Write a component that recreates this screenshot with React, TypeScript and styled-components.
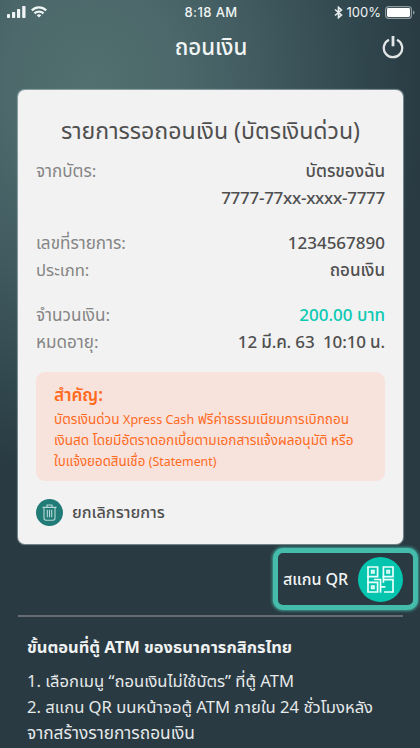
import React from "react";
import styled, { createGlobalStyle } from "styled-components";

const Global = createGlobalStyle`
  *, *::before, *::after { box-sizing: border-box; }
  body { margin: 0; background: #293a42; font-family: "Noto Sans", "Noto Sans Thai", "Open Sans", sans-serif; }
`;

const Screen = styled.main`
  width: 420px;
  height: 748px;
  overflow: hidden;
  display: flex;
  flex-direction: column;
  background: radial-gradient(ellipse 335px 390px at 90px 85px, #527070 0%, #4d696b 25%, #415b60 50%, #324950 78%, #293a42 100%);
`;

const StatusBar = styled.header`
  height: 24px;
  display: grid;
  grid-template-columns: 1fr auto 1fr;
  align-items: center;
  padding: 0 5px 0 7px;
  color: #f1f4f4;
  font-family: "Inter", sans-serif;
`;
const StatusGroup = styled.div<{ $end?: boolean }>`
  display: flex;
  align-items: center;
  justify-content: ${(p) => (p.$end ? "flex-end" : "flex-start")};
  gap: ${(p) => (p.$end ? 4 : 5)}px;
`;
const StatusText = styled.span<{ $size: number; $weight?: number; $gap?: number }>`
  font-size: ${(p) => p.$size}px;
  font-weight: ${(p) => p.$weight ?? 400};
  letter-spacing: ${(p) => p.$gap ?? 0}px;
  white-space: nowrap;
`;

const TitleBar = styled.div`
  height: 66px;
  padding: 6px 15px 0 17px;
  display: grid;
  grid-template-columns: 24px 1fr 24px;
  grid-template-rows: 34px;
  align-items: center;
  justify-items: center;
`;

const Line = styled.span<{ $size: number; $color: string; $weight?: number; $gap?: number; $height?: number }>`
  display: block;
  white-space: pre;
  font-size: ${(p) => p.$size}px;
  line-height: ${(p) => p.$height ?? 27}px;
  height: ${(p) => p.$height ?? 27}px;
  color: ${(p) => p.$color};
  font-weight: ${(p) => p.$weight ?? 400};
  letter-spacing: ${(p) => p.$gap ?? 0}px;
`;
const Latin = styled.span`
  font-size: 0.93em;
`;

const Card = styled.section`
  margin: 0 17px 0 18px;
  height: 454px;
  flex: none;
  padding: 26px 18px 0;
  border-radius: 7px;
  background: #f2f2f2;
  box-shadow: 0 0 1px 1px rgba(190, 208, 208, 0.55);
  display: flex;
  flex-direction: column;
`;
const CardTitle = styled.h2`
  margin: 0 0 13px;
  display: flex;
  justify-content: center;
`;
const Details = styled.div`
  display: grid;
  gap: 18px;
`;
const Row = styled.div`
  display: flex;
  justify-content: space-between;
`;
const Notice = styled.div`
  margin-top: 17px;
  height: 109px;
  padding: 10px 18px 0;
  border-radius: 9px;
  background: #f8e2dc;
`;
const NoticeBody = styled.div`
  margin-top: 1.5px;
`;
const CancelButton = styled.button`
  margin-top: 17.6px;
  padding: 0;
  border: 0;
  background: none;
  display: flex;
  align-items: center;
  gap: 9px;
  font-family: inherit;
  text-align: left;
`;
const Disc = styled.span<{ $size: number; $color: string }>`
  width: ${(p) => p.$size}px;
  height: ${(p) => p.$size}px;
  border-radius: 50%;
  background: ${(p) => p.$color};
  display: grid;
  place-items: center;
  flex: none;
`;
const ScanButton = styled.button`
  align-self: flex-end;
  margin: 4px 2px 0 0;
  width: 145px;
  height: 62px;
  flex: none;
  padding: 0 10px 0 5px;
  border: 5px solid #45bbab;
  border-radius: 10px;
  background: #293a42;
  box-shadow: 0 0 3px 1px rgba(69, 187, 171, 0.75);
  display: flex;
  align-items: center;
  justify-content: space-between;
  font-family: inherit;
`;
const Steps = styled.section`
  margin: 5px 17px 0 18px;
  padding: 17px 0 0 9px;
  border-top: 2px solid #666b72;
`;
const StepList = styled.div`
  margin-top: 8px;
`;

const Signal = () => (
  <svg width="19" height="12" viewBox="0 0 19 12" fill="#f1f4f4">
    <rect x="0" y="8" width="3" height="4" rx=".7" />
    <rect x="5" y="6" width="3.2" height="6" rx=".7" />
    <rect x="10" y="3" width="3.2" height="9" rx=".7" />
    <rect x="15.2" y="0" width="3.3" height="12" rx=".7" />
  </svg>
);
const Wifi = () => (
  <svg width="16" height="12" viewBox="0 0 16 12" fill="none" stroke="#f1f4f4" strokeWidth="2.4">
    <path d="M.8 4.4C4.8.3 11.2.3 15.2 4.4" />
    <path d="M3.5 7.4C6 5 10 5 12.5 7.4" />
    <path d="M5.7 9.2C7 7.9 9 7.9 10.3 9.2L8 11.6Z" fill="#f1f4f4" stroke="none" />
  </svg>
);
const Bluetooth = () => (
  <svg width="9" height="13" viewBox="0 0 9 13" fill="none" stroke="#e9eded" strokeWidth="1.6">
    <path d="M1 3.5 7.5 9 4.5 11.6V1.4L7.5 4 1 9.5" />
  </svg>
);
const Battery = () => (
  <svg width="30" height="13" viewBox="0 0 30 13">
    <rect x=".6" y=".6" width="25.8" height="11.8" rx="3" fill="none" stroke="#8c9a9e" strokeWidth="1.2" />
    <rect x="2" y="2" width="23" height="9" rx="1.4" fill="#fff" />
    <path d="M28 4.5C30 5 30 8 28 8.5Z" fill="#8c9a9e" />
  </svg>
);
const Power = () => (
  <svg width="22" height="24" viewBox="0 0 22 24" fill="none" stroke="#e2e5e5" strokeWidth="2.3">
    <path d="M7 4.7A9.2 9.2 0 1 0 15 4.7" />
    <path d="M11 1V11.3" strokeWidth="2.8" />
  </svg>
);
const Trash = () => (
  <svg width="15" height="17" viewBox="0 0 15 17" fill="none" stroke="#b9d8d5" strokeWidth="1.1">
    <path d="M.5 3.4H14.5M5 3.2V1H10V3.2M2 3.7V14C2 15.4 2.8 16.2 4 16.2H11C12.2 16.2 13 15.4 13 14V3.7" />
    <path d="M5.3 5.8V13.3M7.5 5.8V13.3M9.7 5.8V13.3" />
  </svg>
);
const QrCode = () => (
  <svg width="27" height="27" viewBox="0 0 27 27" fill="none" stroke="#eafffb" strokeWidth="1.7">
    <path d="M1 1H10.6V10.6H1ZM16.4 1H26V10.6H16.4ZM1 16.4H10.6V26H1Z" />
    <path d="M4.6 4.6H7V7H4.6ZM20 4.6H22.4V7H20ZM4.6 20H7V22.4H4.6Z" strokeWidth="1.6" />
    <path d="M1 10V17M7 13.5H13.5V26.8M13.5 20.8H18.4M16.4 10V16.8M16.4 13.6H26V26H17" />
  </svg>
);

const ink = "#4f4f4f";
const muted = "#858585";
const orange = "#ff6a1c";
const pale = "#e6e9ea";

type Detail = { label?: string; value: string; color?: string; labelSize?: number; valueGap?: number };
const groups: Detail[][] = [
  [
    { label: "จากบัตร:", value: "บัตรของฉัน" },
    { value: "7777-77xx-xxxx-7777", valueGap: -0.27 },
  ],
  [
    { label: "เลขที่รายการ:", value: "1234567890" },
    { label: "ประเภท:", value: "ถอนเงิน", labelSize: 16.6 },
  ],
  [
    { label: "จำนวนเงิน:", value: "200.00 บาท", color: "#09c9b2" },
    { label: "หมดอายุ:", value: "12 มี.ค. 63  10:10 น.", valueGap: -0.15 },
  ],
];

export default function App() {
  return (
    <>
      <Global />
      <Screen>
        <StatusBar>
          <StatusGroup><Signal /><Wifi /></StatusGroup>
          <StatusText $size={13} $weight={500} $gap={0.4}>8:18 AM</StatusText>
          <StatusGroup $end><Bluetooth /><StatusText $size={13}>100%</StatusText><Battery /></StatusGroup>
        </StatusBar>
        <TitleBar>
          <span />
          <Line $size={22.3} $color="#f2f5f5" $weight={500} $height={34}>ถอนเงิน</Line>
          <Power />
        </TitleBar>
        <Card>
          <CardTitle><Line $size={23.1} $color={ink} $height={28}>รายการรอถอนเงิน (บัตรเงินด่วน)</Line></CardTitle>
          <Details>
            {groups.map((rows, i) => (
              <div key={i}>
                {rows.map((r) => (
                  <Row key={r.value}>
                    <Line $size={r.labelSize ?? 17.1} $color={muted}>{r.label}</Line>
                    <Line $size={17} $color={r.color ?? ink} $gap={r.valueGap} $weight={500}>{r.value}</Line>
                  </Row>
                ))}
              </div>
            ))}
          </Details>
          <Notice>
            <Line $size={17.2} $color={orange} $weight={600} $height={25}>สำคัญ:</Line>
            <NoticeBody>
              <Line $size={13.5} $color={orange} $height={21.3}>บัตรเงินด่วน <Latin>Xpress Cash</Latin> ฟรีค่าธรรมเนียมการเบิกถอน</Line>
              <Line $size={13.55} $color={orange} $height={21.3}>เงินสด โดยมีอัตราดอกเบี้ยตามเอกสารแจ้งผลอนุมัติ หรือ</Line>
              <Line $size={13.3} $color={orange} $height={21.3}>ใบแจ้งยอดสินเชื่อ <Latin>(Statement)</Latin></Line>
            </NoticeBody>
          </Notice>
          <CancelButton>
            <Disc $size={27} $color="#217b77"><Trash /></Disc>
            <Line $size={16.2} $color={ink} $weight={500}>ยกเลิกรายการ</Line>
          </CancelButton>
        </Card>
        <ScanButton>
          <Line $size={16} $color="#f4f6f6" $weight={500}>สแกน QR</Line>
          <Disc $size={45} $color="#05c5af"><QrCode /></Disc>
        </ScanButton>
        <Steps>
          <Line $size={16.5} $color="#f0f2f2" $weight={700} $height={26}>ขั้นตอนที่ตู้ ATM ของธนาคารกสิกรไทย</Line>
          <StepList>
            <Line $size={16.6} $color={pale} $height={26}>1. เลือกเมนู “ถอนเงินไม่ใช้บัตร” ที่ตู้ ATM</Line>
            <Line $size={16.6} $color={pale} $height={26}>2. สแกน QR บนหน้าจอตู้ ATM ภายใน 24 ชั่วโมงหลัง</Line>
            <Line $size={17.3} $color={pale} $height={26}>จากสร้างรายการถอนเงิน</Line>
          </StepList>
        </Steps>
      </Screen>
    </>
  );
}
